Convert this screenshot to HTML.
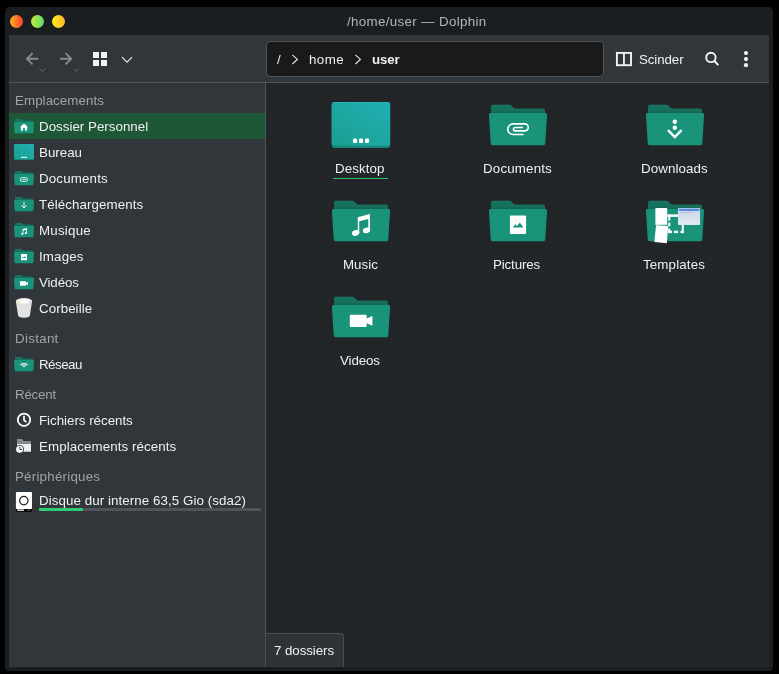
<!DOCTYPE html>
<html lang="fr">
<head>
<meta charset="utf-8">
<title>/home/user — Dolphin</title>
<style>
html,body{margin:0;padding:0;background:#000;}
body{width:779px;height:674px;overflow:hidden;position:relative;
  font-family:"Liberation Sans","DejaVu Sans",sans-serif;font-size:13.33px;color:#eff0f1;
  -webkit-font-smoothing:antialiased;}
.abs{position:absolute;}
#frame{position:absolute;left:5px;top:7px;width:768px;height:664px;background:#1b1e20;border-radius:5px 5px 4px 4px;}
#title{position:absolute;left:0;top:7px;width:779px;height:28px;line-height:28px;text-align:center;color:#b3b5b6;font-size:13.33px;}
#title span{position:absolute;left:347.3px;top:0.5px;white-space:nowrap;letter-spacing:0.347px;}
.tl{position:absolute;top:15px;width:13px;height:13px;border-radius:50%;}
#toolbar{position:absolute;left:9px;top:35px;width:760px;height:47px;background:#31363b;}
#tbline{position:absolute;left:9px;top:82px;width:760px;height:1px;background:#52565a;}
#sidebar{position:absolute;left:9px;top:83px;width:256px;height:584px;background:#31363b;}
#sideline{position:absolute;left:265px;top:83px;width:1px;height:584px;background:#52565a;}
#view{position:absolute;left:266px;top:83px;width:503px;height:584px;background:#232629;}
#crumb{position:absolute;left:266px;top:41px;width:336px;height:34px;border:1px solid #505458;border-radius:4px;background:#1a1a1a;}
.t,.lbl,#title span{will-change:transform;}
.t{position:absolute;white-space:nowrap;line-height:16px;height:16px;z-index:2;}
.hdr{color:#a1a4a6;}
#sel{position:absolute;left:9px;top:113px;width:256px;height:26px;background:#1e5736;}
.lbl{position:absolute;white-space:nowrap;line-height:16px;height:16px;text-align:center;}
#status{position:absolute;left:265px;top:633px;width:79px;height:34px;box-sizing:border-box;border:1px solid #4b4f53;border-bottom:none;border-radius:0 4px 0 0;background:#2f3338;}
svg{position:absolute;overflow:visible;}
</style>
</head>
<body>
<svg width="0" height="0" style="left:0;top:0">
<defs>
<linearGradient id="gdesk" x1="0" y1="1" x2="1" y2="0"><stop offset="0" stop-color="#1a9f90"/><stop offset="1" stop-color="#22afb4"/></linearGradient>
<linearGradient id="gback" gradientUnits="userSpaceOnUse" x1="0" y1="0.75" x2="0" y2="9"><stop offset="0" stop-color="#177b67"/><stop offset="0.2" stop-color="#15725e"/><stop offset="0.7" stop-color="#156f5b"/><stop offset="1" stop-color="#136652"/></linearGradient>
<linearGradient id="gbacks" gradientUnits="userSpaceOnUse" x1="0" y1="0" x2="0" y2="2.9"><stop offset="0" stop-color="#177a68"/><stop offset="1" stop-color="#146d59"/></linearGradient>
<symbol id="sf" viewBox="0 0 20 15" overflow="visible">
<path d="M1 0.7Q1 0 1.7 0L7 0Q7.6 0 8 0.45L8.5 1Q8.9 1.4 9.5 1.4L18.3 1.4Q19 1.4 19 2.1L19 8L1 8Z" fill="url(#gbacks)"/>
<path d="M0.6 2.9L19.4 2.9Q20.1 2.9 20 3.6L19.4 13.5Q19.35 14.2 18.65 14.2L1.35 14.2Q0.65 14.2 0.6 13.5L0 3.6Q-0.1 2.9 0.6 2.9Z" fill="#1a937b"/>
</symbol>
<symbol id="bf" viewBox="0 0 58 42" overflow="visible">
<path d="M2 2.75Q2 0.75 4 0.75L20.2 0.75Q21.2 0.75 22 1.4L24.9 3.9Q25.7 4.55 26.7 4.55L54 4.55Q56 4.55 56 6.55L56 30L2 30Z" fill="url(#gback)"/>
<path d="M1.6 9L56.4 9Q58.2 9 58.05 10.8L56.25 39.6Q56.1 41.3 54.4 41.3L3.6 41.3Q1.9 41.3 1.75 39.6L-0.05 10.8Q-0.2 9 1.6 9Z" fill="#1a937b"/>
</symbol>
</defs></svg>
<div id="frame"></div>
<div id="title"><span>/home/user — Dolphin</span></div>
<div class="tl" style="left:10px;background:linear-gradient(90deg,#ffb420 0%,#ff7e24 45%,#ff4c2c 85%);"></div>
<div class="tl" style="left:31px;background:linear-gradient(90deg,#c6e834,#5cdc74);"></div>
<div class="tl" style="left:52px;background:linear-gradient(90deg,#fff01a,#ffb42a);"></div>
<div id="toolbar"></div>
<div id="tbline"></div>
<div id="sidebar"></div>
<div id="sideline"></div>
<div id="view"></div>
<div id="crumb"></div>
<div id="sel"></div>
<!--SIDEBAR-->
<div class="t hdr" style="left:14.7px;top:93px;letter-spacing:0.068px;">Emplacements</div>
<div class="t" style="left:39.0px;top:119px;letter-spacing:0.018px;">Dossier Personnel</div>
<div class="t" style="left:39.0px;top:145px;letter-spacing:0.003px;">Bureau</div>
<div class="t" style="left:39.0px;top:171px;letter-spacing:0.160px;">Documents</div>
<div class="t" style="left:38.6px;top:197px;letter-spacing:0.087px;">Téléchargements</div>
<div class="t" style="left:39.0px;top:223px;letter-spacing:0.218px;">Musique</div>
<div class="t" style="left:39.0px;top:249px;letter-spacing:0.156px;">Images</div>
<div class="t" style="left:38.6px;top:275px;letter-spacing:-0.123px;">Vidéos</div>
<div class="t" style="left:39.0px;top:301px;letter-spacing:0.061px;">Corbeille</div>
<div class="t hdr" style="left:14.7px;top:331px;letter-spacing:0.303px;">Distant</div>
<div class="t" style="left:39.0px;top:357px;letter-spacing:-0.511px;">Réseau</div>
<div class="t hdr" style="left:14.7px;top:387px;letter-spacing:-0.227px;">Récent</div>
<div class="t" style="left:39.0px;top:413px;letter-spacing:-0.019px;">Fichiers récents</div>
<div class="t" style="left:39.0px;top:439px;letter-spacing:0.091px;">Emplacements récents</div>
<div class="t hdr" style="left:14.7px;top:469px;letter-spacing:0.229px;">Périphériques</div>
<div class="t" style="left:39.0px;top:493px;letter-spacing:0.076px;">Disque dur interne 63,5 Gio (sda2)</div>

<!-- home -->
<svg style="left:14px;top:119px" width="20" height="15"><use href="#sf" width="20" height="15"/>
<path d="M10 4.8Q10.5 4.8 11 5.3L13.8 8L13.1 8.6L13.1 11.7L11.2 11.7L11.2 9.2L8.9 9.2L8.9 11.7L6.9 11.7L6.9 8.6L6.2 8L9 5.3Q9.5 4.8 10 4.8Z" fill="#fff"/></svg>
<!-- bureau -->
<svg style="left:14px;top:144px" width="20" height="16"><rect x="0" y="0" width="20" height="16" rx="1" fill="#148a7c"/><rect x="0" y="0" width="20" height="15" rx="1" fill="url(#gdesk)"/>
<rect x="7" y="12.8" width="1.6" height="1.2" fill="#fff"/><rect x="9.2" y="12.8" width="1.6" height="1.2" fill="#fff"/><rect x="11.4" y="12.8" width="1.6" height="1.2" fill="#fff"/></svg>
<!-- documents -->
<svg style="left:14px;top:171px" width="20" height="15"><use href="#sf" width="20" height="15"/>
<rect x="6.2" y="6.7" width="7.4" height="3.6" rx="1.8" fill="none" stroke="#fff" stroke-width="0.85"/><path d="M8.3 8.5L12 8.5" stroke="#fff" stroke-width="0.7"/></svg>
<!-- telechargements -->
<svg style="left:14px;top:197px" width="20" height="15"><use href="#sf" width="20" height="15"/>
<path d="M10 5.2L10 9.6M7.4 8.4L10 10.9L12.6 8.4" fill="none" stroke="#fff" stroke-width="1"/></svg>
<!-- musique -->
<svg style="left:14px;top:223px" width="20" height="15"><use href="#sf" width="20" height="15"/>
<path d="M8.6 6.1L12.9 5.1L12.9 10.1A1.1 0.9 0 1 1 12.1 9.3L12.1 6.9L9.4 7.5L9.4 10.9A1.1 0.9 0 1 1 8.6 10.1Z" fill="#fff"/></svg>
<!-- images -->
<svg style="left:14px;top:249px" width="20" height="15"><use href="#sf" width="20" height="15"/>
<rect x="7" y="4.9" width="6" height="6.4" rx="0.4" fill="#fff"/><path d="M8 9L9.1 7.8L9.7 8.4L10.7 7.3L12 9Z" fill="#1a937b"/></svg>
<!-- videos -->
<svg style="left:14px;top:275px" width="20" height="15"><use href="#sf" width="20" height="15"/>
<path d="M6.3 6.3L11.6 6.3Q12 6.3 12 6.7L12 7.8L14 6.7L14 10.3L12 9.2L12 10.3Q12 10.7 11.6 10.7L6.3 10.7Q5.9 10.7 5.9 10.3L5.9 6.7Q5.9 6.3 6.3 6.3Z" fill="#fff"/></svg>
<!-- corbeille -->
<svg style="left:14px;top:297px" width="20" height="22">
<path d="M1.8 4L18.1 4L15.9 18.6Q15.7 20.7 10 20.7Q4.3 20.7 4.1 18.6Z" fill="#e2e2e2"/>
<ellipse cx="10" cy="4" rx="8.15" ry="2.9" fill="#ececec"/><ellipse cx="10" cy="4.5" rx="6" ry="1.75" fill="#fff"/>
<path d="M4.1 5.4L6.4 3.9L6.6 4.4L4.6 6.2Z" fill="#f3c623"/><path d="M15 4.6L15.5 4.2L16.2 5.4L15.8 5.8Z" fill="#1aa3a8"/></svg>
<!-- reseau -->
<svg style="left:14px;top:357px" width="20" height="15"><use href="#sf" width="20" height="15"/>
<path d="M5.9 7.2Q10 5 14.1 7.2L10 10.5Z" fill="#fff" fill-opacity="0.85"/><path d="M7.3 8.2Q10 6.7 12.7 8.2M8.6 9.3Q10 8.5 11.4 9.3" fill="none" stroke="#1a937b" stroke-width="0.6"/></svg>
<!-- fichiers recents -->
<svg style="left:16px;top:412px" width="16" height="16"><circle cx="8" cy="7.8" r="6.2" fill="none" stroke="#fff" stroke-width="1.8"/><path d="M8 3.7L8 8L10.4 10.1" fill="none" stroke="#fff" stroke-width="1.7"/></svg>
<!-- emplacements recents -->
<svg style="left:16px;top:438px" width="16" height="16">
<path d="M1 1L6 1L7.7 3L15 3L15 6.5L1 6.5Z" fill="#85888b"/>
<rect x="1" y="6" width="14" height="7.7" fill="#efefef"/>
<circle cx="3.6" cy="11.3" r="4.4" fill="#31363b"/><circle cx="3.6" cy="11.3" r="3.5" fill="#f6f6f6"/>
<path d="M3.9 9L3.9 11.5L6 11.5" fill="none" stroke="#2a2e32" stroke-width="0.95"/></svg>
<!-- disque -->
<svg style="left:15px;top:492px" width="18" height="20">
<rect x="0.9" y="0.1" width="16.1" height="19.8" rx="1.2" fill="#0b0b0b"/><rect x="0.9" y="0.1" width="16.1" height="17" rx="0.8" fill="#fff"/>
<circle cx="8.8" cy="8.6" r="4.2" fill="none" stroke="#1f2225" stroke-width="1.25"/>
<rect x="2.2" y="17.5" width="6.8" height="1.3" fill="#fff"/><rect x="12.8" y="17.7" width="2" height="0.9" fill="#888"/></svg>
<div class="abs" style="left:39px;top:508px;width:222px;height:3px;background:#505459;border-radius:1px;"></div>
<div class="abs" style="left:39px;top:508px;width:44px;height:3px;background:#2ecc71;border-radius:1px;"></div>


<!-- back -->
<svg style="left:25px;top:51px" width="16" height="16"><path d="M13.2 7.8L2.4 7.8M7.6 2.2L2 7.8L7.6 13.4" fill="none" stroke="#868a8d" stroke-width="1.9"/></svg>
<svg style="left:39px;top:68px" width="7" height="5"><path d="M0.9 1L3.4 3.5L5.9 1" fill="none" stroke="#6f7376" stroke-width="0.9"/></svg>
<!-- forward -->
<svg style="left:59px;top:51px" width="16" height="16"><path d="M1 7.8L11.8 7.8M6.6 2.2L12.2 7.8L6.6 13.4" fill="none" stroke="#868a8d" stroke-width="1.9"/></svg>
<svg style="left:73px;top:68px" width="7" height="5"><path d="M0.9 1L3.4 3.5L5.9 1" fill="none" stroke="#6f7376" stroke-width="0.9"/></svg>
<!-- grid -->
<svg style="left:93px;top:52px" width="14" height="14"><rect x="0" y="0" width="6" height="6" fill="#f3f3f3"/><rect x="8" y="0" width="6" height="6" fill="#f3f3f3"/><rect x="0" y="8" width="6" height="6" fill="#f3f3f3"/><rect x="8" y="8" width="6" height="6" fill="#f3f3f3"/></svg>
<svg style="left:121px;top:56px" width="12" height="8"><path d="M1 1.2L6 6.2L11 1.2" fill="none" stroke="#f0f0f0" stroke-width="1.1"/></svg>
<!-- breadcrumb -->
<div class="t" style="left:277px;top:52px;">/</div>
<svg style="left:291px;top:54px" width="8" height="11"><path d="M1.4 0.8L6.4 5.4L1.4 10" fill="none" stroke="#e8e9ea" stroke-width="1.1"/></svg>
<div class="t" style="left:308.8px;top:52px;letter-spacing:0.45px;">home</div>
<svg style="left:354px;top:54px" width="8" height="11"><path d="M1.4 0.8L6.4 5.4L1.4 10" fill="none" stroke="#e8e9ea" stroke-width="1.1"/></svg>
<div class="t" style="left:372px;top:52px;font-weight:bold;letter-spacing:-0.18px;">user</div>
<!-- split -->
<svg style="left:615px;top:52px" width="18" height="14"><rect x="1.9" y="0.9" width="14.1" height="12.3" fill="none" stroke="#f3f3f3" stroke-width="1.9"/><path d="M8.95 1L8.95 13" stroke="#f3f3f3" stroke-width="1.8"/></svg>
<div class="t" style="left:638.8px;top:52px;letter-spacing:-0.1px;">Scinder</div>
<!-- search -->
<svg style="left:704px;top:51px" width="16" height="16"><circle cx="6.9" cy="6.45" r="4.7" fill="none" stroke="#f3f3f3" stroke-width="1.9"/><path d="M10.2 9.8L14.3 14.1" stroke="#f3f3f3" stroke-width="2"/></svg>
<!-- menu -->
<svg style="left:742px;top:50px" width="8" height="18"><circle cx="4" cy="3" r="2.1" fill="#f3f3f3"/><circle cx="4" cy="9.1" r="2.1" fill="#f3f3f3"/><circle cx="4" cy="15.2" r="2.1" fill="#f3f3f3"/></svg>
<!--VIEW-->
<!-- Desktop -->
<svg style="left:331px;top:102px" width="60" height="47">
<rect x="0.8" y="-0.1" width="58.3" height="46.1" rx="2.8" fill="#14877b"/>
<rect x="0.8" y="-0.1" width="58.3" height="43.4" rx="2.8" fill="#2cb6b9"/>
<rect x="0.8" y="0.7" width="58.3" height="42.7" rx="2.4" fill="url(#gdesk)"/>
<rect x="22" y="36.5" width="4.1" height="4.4" rx="1.2" fill="#fff"/><rect x="28" y="36.5" width="4.1" height="4.4" rx="1.2" fill="#fff"/><rect x="34" y="36.5" width="4.1" height="4.4" rx="1.2" fill="#fff"/></svg>
<div class="abs" style="left:333px;top:178px;width:55px;height:1px;background:#2bc168;"></div>
<!-- Documents -->
<svg style="left:489px;top:104px" width="58" height="42"><use href="#bf" width="58" height="42"/>
<path d="M34.6 30.5L24.05 30.5A5.3 5.3 0 0 1 24.05 19.9L35.75 19.9A3.5 3.5 0 0 1 35.75 26.9L26.2 26.9A1.7 1.7 0 0 1 26.2 23.5L34.1 23.5" fill="none" stroke="#fff" stroke-width="1.6"/></svg>
<!-- Downloads -->
<svg style="left:646px;top:104px" width="58" height="42"><use href="#bf" width="58" height="42"/>
<circle cx="28.8" cy="17.7" r="2.25" fill="#fff"/><circle cx="28.8" cy="23.85" r="2.25" fill="#fff"/>
<path d="M22 26.1L28.8 33.1L35.6 26.1" fill="none" stroke="#fff" stroke-width="2.4"/></svg>
<!-- Music -->
<svg style="left:332px;top:200px" width="58" height="42"><use href="#bf" width="58" height="42"/>
<path d="M25.8 17.3L37.9 14.1L37.9 30.6L36.3 30.6L36.3 19L27.2 21.3L27.2 33L25.8 33Z" fill="#fff"/>
<ellipse cx="23.7" cy="32.9" rx="3.8" ry="2.75" transform="rotate(-20 23.7 32.9)" fill="#fff"/>
<ellipse cx="34.5" cy="30.4" rx="3.7" ry="2.7" transform="rotate(-20 34.5 30.4)" fill="#fff"/></svg>
<!-- Pictures -->
<svg style="left:489px;top:200px" width="58" height="42"><use href="#bf" width="58" height="42"/>
<rect x="20.9" y="15.5" width="16.2" height="18.4" rx="0.8" fill="#fff"/>
<path d="M23.7 27.6L26.5 24.2L28.1 26.1L30.9 22.4L34.3 27.6Z" fill="#1a937b"/></svg>
<!-- Templates -->
<svg style="left:646px;top:200px" width="58" height="44"><use href="#bf" width="58" height="42"/>
<defs><linearGradient id="gwin" x1="0" y1="0" x2="0" y2="1"><stop offset="0" stop-color="#c4d3ee"/><stop offset="1" stop-color="#e5e9f2"/></linearGradient></defs>
<rect x="9.4" y="8" width="11.8" height="16.8" fill="#fff"/>
<path d="M10.1 25.3L22.2 26L20.8 43.2L8.3 42Z" fill="#fff"/>
<g fill="#fff"><rect x="21.2" y="14.4" width="11" height="2.5"/>
<rect x="22.2" y="14.4" width="2.1" height="6.2"/><rect x="22.2" y="22.6" width="2.1" height="3.7"/><rect x="22.2" y="28.6" width="2.1" height="4.5"/>
<rect x="22.2" y="30.7" width="3.8" height="2.4"/><rect x="27.9" y="30.7" width="4.2" height="2.4"/><rect x="34.5" y="30.7" width="3.3" height="2.4"/>
<rect x="35.8" y="25" width="2" height="8.1"/></g>
<rect x="32.1" y="8.2" width="21.8" height="16.6" fill="url(#gwin)"/><rect x="32.1" y="8.2" width="21.8" height="2.7" fill="#4f88e0"/>
<rect x="32.3" y="8.4" width="21.4" height="16.2" fill="none" stroke="#eef1f8" stroke-width="0.5"/>
<rect x="34.5" y="12.3" width="13.5" height="0.8" fill="#b4bfd6"/></svg>
<!-- Videos -->
<svg style="left:332px;top:296px" width="58" height="42"><use href="#bf" width="58" height="42"/>
<path d="M18.8 18.7L33.7 18.7Q34.7 18.7 34.7 19.7L34.7 22.4L40.4 20L40.4 29.8L34.7 27.3L34.7 30Q34.7 31 33.7 31L18.8 31Q17.8 31 17.8 30L17.8 19.7Q17.8 18.7 18.8 18.7Z" fill="#fff"/></svg>
<div class="t" style="left:335.2px;top:161px;letter-spacing:0.066px;">Desktop</div>
<div class="t" style="left:482.6px;top:161px;letter-spacing:0.172px;">Documents</div>
<div class="t" style="left:640.8px;top:161px;letter-spacing:0.106px;">Downloads</div>
<div class="t" style="left:342.7px;top:257px;letter-spacing:0.022px;">Music</div>
<div class="t" style="left:493.0px;top:257px;letter-spacing:-0.137px;">Pictures</div>
<div class="t" style="left:642.8px;top:257px;letter-spacing:0.144px;">Templates</div>
<div class="t" style="left:339.8px;top:353px;letter-spacing:-0.103px;">Videos</div>

<div id="status"></div>
<div class="t" style="left:274px;top:643px;letter-spacing:-0.07px;">7 dossiers</div>
</body>
</html>
